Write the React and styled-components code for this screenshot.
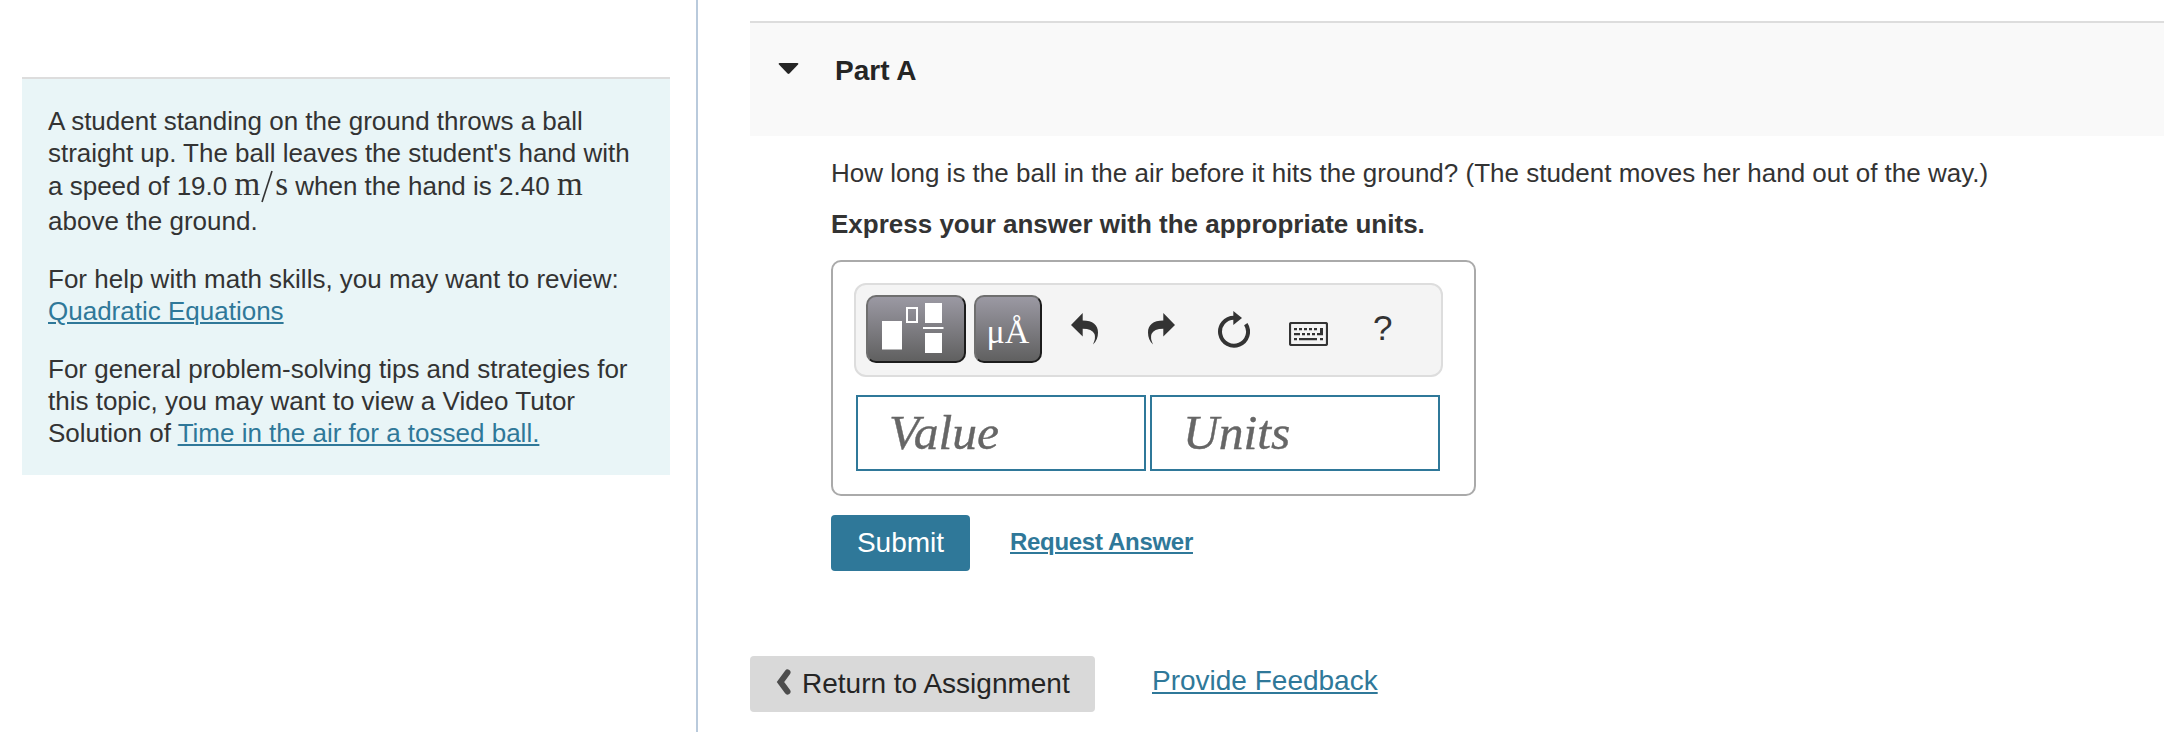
import React from "react";
import styled, { createGlobalStyle } from "styled-components";

const GlobalStyle = createGlobalStyle`
  * {
    box-sizing: border-box;
  }
  body {
    margin: 0;
    background: #fff;
    overflow: hidden;
  }
`;

export default function App() {
  return (
    <Page>
      <GlobalStyle />
      <Sidebar>
        <Intro>
          <Paragraph>
            <Line>A student standing on the ground throws a ball</Line>
            <Line $spacing={-0.02}>straight up. The ball leaves the student's hand with</Line>
            <Line $height={34}>
              a speed of 19.0 <MathText>m</MathText>
              <Slash viewBox="0 0 12 33">
                <path d="M11 1 1 32" stroke="#333" strokeWidth="1.6" />
              </Slash>
              <MathText>s</MathText> when the hand is 2.40 <MathText>m</MathText>
            </Line>
            <Line $height={36}>above the ground.</Line>
          </Paragraph>
          <Paragraph>
            <Line>For help with math skills, you may want to review:</Line>
            <Line>
              <Link href="#">Quadratic Equations</Link>
            </Line>
          </Paragraph>
          <Paragraph>
            <Line>For general problem-solving tips and strategies for</Line>
            <Line>this topic, you may want to view a Video Tutor</Line>
            <Line>
              Solution of <Link href="#">Time in the air for a tossed ball.</Link>
            </Line>
          </Paragraph>
        </Intro>
      </Sidebar>
      <Main>
        <PartHeader>
          <Caret viewBox="0 0 22 13">
            <path d="M1.5 0h19q2 .5 .6 2L12 11.400q-1 1-2 0L.9 2Q-.5 .5 1.500 0Z" fill="#252525" />
          </Caret>
          <PartTitle>Part A</PartTitle>
        </PartHeader>
        <PartBody>
          <Question>
            How long is the ball in the air before it hits the ground? (The student moves her hand out of the way.)
          </Question>
          <Instruction>Express your answer with the appropriate units.</Instruction>
          <AnswerBox>
            <Toolbar>
              <DarkButton $width={100}>
                <TemplatesIcon />
              </DarkButton>
              <DarkButton $width={68}>
                <Symbols>μÅ</Symbols>
              </DarkButton>
              <ToolIcons>
                <UndoIcon />
                <RedoIcon />
                <ResetIcon />
                <KeyboardIcon />
                <Help>?</Help>
              </ToolIcons>
            </Toolbar>
            <Fields>
              <Field>Value</Field>
              <Field>Units</Field>
            </Fields>
          </AnswerBox>
          <Actions>
            <Submit>Submit</Submit>
            <RequestLink href="#">Request Answer</RequestLink>
          </Actions>
        </PartBody>
        <Footer>
          <ReturnButton>
            <Chevron viewBox="0 0 15 26">
              <path d="M11.500 3.500 4.500 13l7 9.500" fill="none" stroke="#4d4d4d" strokeWidth="6" strokeLinecap="round" />
            </Chevron>
            Return to Assignment
          </ReturnButton>
          <FeedbackLink href="#">Provide Feedback</FeedbackLink>
        </Footer>
      </Main>
    </Page>
  );
}

function TemplatesIcon() {
  return (
    <Templates viewBox="0 0 62 52">
      <rect x="0" y="18" width="20" height="28.5" />
      <rect x="25" y="5" width="10" height="14" fill="none" stroke="#fff" strokeWidth="2" />
      <rect x="43" y="0" width="17" height="20" />
      <rect x="41" y="24" width="20.500" height="2" />
      <rect x="43" y="30" width="17" height="20" />
    </Templates>
  );
}

function UndoIcon() {
  return (
    <Icon $width={27} $height={32} $left={29} viewBox="0 0 27 32">
      <path d="M0 12 11.700 0V7.500C22 7.500 27 12 27 19.500Q27 27 22 31.500Q25 25 23.500 21Q21 15.700 11.700 15.700V23.500Z" />
    </Icon>
  );
}

function RedoIcon() {
  return (
    <Icon $width={27} $height={32} $left={50} viewBox="0 0 27 32">
      <path d="M27 12 15.300 0V7.500C5 7.500 0 12 0 19.500Q0 27 5 31.500Q2 25 3.500 21Q6 15.700 15.300 15.700V23.500Z" />
    </Icon>
  );
}

function ResetIcon() {
  return (
    <Icon $width={32} $height={37} $left={43} $top={-2} viewBox="0 0 32 37">
      <path d="M16 6.700A14 14 0 1 0 27.800 13.100" fill="none" stroke="#333" strokeWidth="4" />
      <path d="M15.300 0 24 7 15.300 14Z" />
    </Icon>
  );
}

function KeyboardIcon() {
  return (
    <Icon $width={39} $height={24} $left={39} $top={9} viewBox="0 0 39 24">
      <rect x="1" y="1" width="37" height="22" rx="1.5" fill="none" stroke="#333" strokeWidth="2.2" />
      <path d="M5 6h3v2.300H5zM10 6h3v2.300h-3zM15 6h3v2.300h-3zM20 6h3v2.300h-3zM25 6h3v2.300h-3zM31 6h3v7.300h-6v-2.300h3zM5 11h6v2.300H5zM13 11h3v2.300h-3zM18 11h3v2.300h-3zM23 11h3v2.300h-3zM5 16h3v2.300H5zM10 16h18v2.300H10zM31 16h3v2.300h-3z" />
    </Icon>
  );
}

const Page = styled.div`
  display: flex;
  width: 2164px;
  height: 732px;
  font-family: "Liberation Sans", Arial, sans-serif;
  font-size: 26px;
  line-height: 32px;
  color: #333;
  white-space: nowrap;
`;

const Sidebar = styled.aside`
  width: 698px;
  padding: 77px 26px 0 22px;
  border-right: 2px solid #b9cadc;
`;

const Intro = styled.section`
  height: 398px;
  padding: 26px;
  border-top: 2px solid #ddd;
  background: #e9f5f7;
`;

const Paragraph = styled.p`
  margin: 0 0 26px;

  &:first-child {
    margin-bottom: 24px;
  }
`;

const Line = styled.span`
  display: block;
  height: ${(p) => p.$height || 32}px;
  line-height: ${(p) => p.$height || 32}px;
  letter-spacing: ${(p) => p.$spacing || 0}px;
`;

const MathText = styled.span`
  font-family: "Liberation Serif", "Times New Roman", serif;
  font-size: 33px;
  line-height: 20px;
`;

const Slash = styled.svg`
  width: 12px;
  height: 33px;
  margin: 0 2px 0 1px;
  vertical-align: -8px;
`;

const Link = styled.a`
  color: #2f7899;
  text-decoration: underline;
  text-decoration-thickness: 2px;
  text-underline-offset: 2px;
`;

const Main = styled.main`
  flex: 1;
  padding: 21px 0 0 52px;
`;

const PartHeader = styled.header`
  display: flex;
  height: 115px;
  padding: 32px 0 0 28px;
  border-top: 2px solid #ddd;
  background: #f9f9f9;
`;

const Caret = styled.svg`
  width: 21px;
  height: 12px;
  margin-top: 8px;
`;

const PartTitle = styled.h2`
  margin: 0 0 0 36px;
  font-size: 28px;
  line-height: 32px;
  color: #252525;
`;

const PartBody = styled.section`
  padding: 21px 0 0 81px;
`;

const Question = styled.p`
  margin: 0;
`;

const Instruction = styled.p`
  margin: 19px 0 20px;
  font-weight: bold;
`;

const AnswerBox = styled.div`
  width: 645px;
  height: 236px;
  padding: 21px;
  border: 2px solid #aaa;
  border-radius: 10px;
`;

const Toolbar = styled.div`
  display: flex;
  gap: 8px;
  width: 589px;
  height: 94px;
  padding: 10px;
  border: 2px solid #ddd;
  border-radius: 12px;
  background: #f4f4f4;
`;

const DarkButton = styled.button`
  display: flex;
  align-items: center;
  justify-content: center;
  width: ${(p) => p.$width}px;
  height: 68px;
  padding: 0;
  border: 2px solid;
  border-color: #6f6f6f #1c1c1c #1c1c1c #6f6f6f;
  border-radius: 10px;
  background: linear-gradient(#9b99a3, #606060);
  color: #fff;
`;

const Templates = styled.svg`
  width: 62px;
  height: 52px;
  margin-right: 6px;
  fill: #fff;
`;

const Symbols = styled.span`
  padding-top: 6px;
  font-family: "Liberation Serif", serif;
  font-size: 34px;
`;

const ToolIcons = styled.div`
  display: flex;
  align-items: flex-start;
  padding-top: 18px;
  margin-left: -8px;
`;

const Icon = styled.svg`
  width: ${(p) => p.$width}px;
  height: ${(p) => p.$height}px;
  margin: ${(p) => p.$top || 0}px 0 0 ${(p) => p.$left}px;
  fill: #333;
`;

const Help = styled.span`
  margin: -1px 0 0 45px;
  font-size: 35px;
`;

const Fields = styled.div`
  display: flex;
  gap: 4px;
  padding: 18px 0 0 2px;
`;

const Field = styled.div`
  width: 290px;
  height: 76px;
  padding-left: 31px;
  border: 2px solid #2f7899;
  font-family: "Liberation Serif", serif;
  font-size: 49.5px;
  font-style: italic;
  line-height: 72px;
  color: #666;
  -webkit-text-stroke: 0.4px #666;
`;

const Actions = styled.div`
  display: flex;
  gap: 40px;
  padding-top: 19px;
`;

const Submit = styled.button`
  width: 139px;
  height: 56px;
  padding: 0;
  border: 0;
  border-radius: 4px;
  background: #2f7899;
  color: #fff;
  font: 28px "Liberation Sans", Arial, sans-serif;
`;

const RequestLink = styled(Link)`
  margin-top: 11px;
  font-size: 24px;
  font-weight: bold;
  letter-spacing: -0.3px;
`;

const Footer = styled.footer`
  display: flex;
  gap: 57px;
  margin-top: 85px;
  font-size: 28px;
`;

const ReturnButton = styled.button`
  display: flex;
  align-items: center;
  width: 345px;
  height: 56px;
  padding: 0 0 0 26px;
  border: 0;
  border-radius: 4px;
  background: #d9d9d9;
  color: #252525;
  font: 28px "Liberation Sans", Arial, sans-serif;
`;

const Chevron = styled.svg`
  width: 15px;
  height: 26px;
  margin: 0 11px 4px 0;
`;

const FeedbackLink = styled(Link)`
  margin-top: 9px;
`;
